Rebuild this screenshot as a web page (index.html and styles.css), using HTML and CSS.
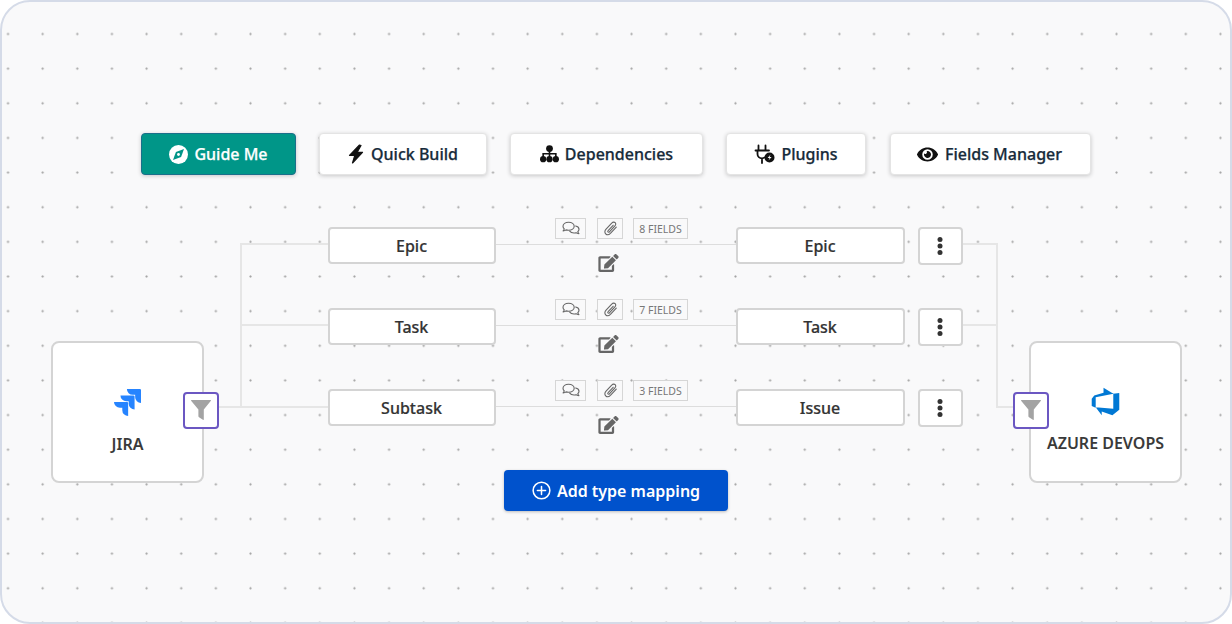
FILE: index.html
```html
<!DOCTYPE html>
<html lang="en">
<head>
<meta charset="utf-8">
<title>Type mapping</title>
<link rel="stylesheet" href="styles.css">
</head>
<body>
<svg class="sprites" width="0" height="0" aria-hidden="true">
  <symbol id="i-filter" viewBox="0 0 20 20"><path d="M.5 0h19a.5.5 0 0 1 .4.8L12.800 9.500V19.300a.6.6 0 0 1-.9.5L8 17.200a1 1 0 0 1-.6-.9V9.500L.1.800A.5.5 0 0 1 .5 0z" fill="#a3a3a3"/></symbol>
  <symbol id="i-comments" viewBox="0 0 24 20"><g fill="none" stroke="#666" stroke-width="1.400" stroke-linejoin="round" stroke-linecap="round"><path d="M9 1.500c-4 0-7 2.200-7 5.100 0 1.300.6 2.400 1.600 3.300-.3 1-.9 1.900-1.500 2.500 1.400-.1 2.800-.6 3.700-1.300.9.300 2 .5 3.200.5 4 0 7-2.200 7-5s-3-5.100-7-5.100z"/><path d="M17.800 6.200c2.500.5 4.200 2.200 4.200 4.200 0 1.200-.6 2.200-1.500 3 .2 1 .8 1.900 1.400 2.500-1.400-.1-2.700-.6-3.600-1.300-.8.300-1.700.4-2.600.4-2.300 0-4.300-.9-5.300-2.300"/></g></symbol>
  <symbol id="i-clip" viewBox="0 0 20 20"><path d="M16.800 8.400l-6.900 7.300c-1.700 1.700-4.200 1.900-5.600.5s-1.200-3.800.5-5.500l6.900-7.200c1.100-1.200 2.800-1.300 3.800-.3s.8 2.700-.3 3.800l-6.500 6.900c-.5.600-1.300.7-1.700.2s-.3-1.200.2-1.700l5.900-6.200" fill="none" stroke="#666" stroke-width="1.300" stroke-linecap="round" stroke-linejoin="round"/></symbol>
  <symbol id="i-edit" viewBox="0 0 576 512"><path fill="#666" d="M402.600 83.200l90.200 90.200c3.800 3.800 3.800 10 0 13.800L274.400 405.600l-92.800 10.300c-12.400 1.400-22.900-9.100-21.500-21.500l10.300-92.800L388.800 83.200c3.800-3.800 10-3.800 13.800 0zm162-22.900l-48.800-48.800c-15.200-15.200-39.900-15.200-55.200 0l-35.400 35.400c-3.800 3.800-3.800 10 0 13.800l90.200 90.200c3.800 3.800 10 3.800 13.800 0l35.400-35.400c15.200-15.300 15.200-40 0-55.200zM384 346.200V448H64V128h229.800c3.200 0 6.200-1.300 8.500-3.500l40-40c7.600-7.600 2.200-20.500-8.500-20.500H48C21.500 64 0 85.500 0 112v352c0 26.500 21.500 48 48 48h352c26.500 0 48-21.500 48-48V306.200c0-10.700-12.900-16-20.500-8.500l-40 40c-2.200 2.300-3.500 5.300-3.500 8.500z"/></symbol>
  <symbol id="i-dots" viewBox="0 0 6 20"><circle cx="3" cy="3.500" r="2.500" fill="#333"/><circle cx="3" cy="10" r="2.500" fill="#333"/><circle cx="3" cy="16.500" r="2.500" fill="#333"/></symbol>
</svg>

<main class="stage">
  <nav class="toolbar">
    <button class="tool tool-primary tool-guide">
      <svg class="tool-icon" width="19" height="19" viewBox="0 0 20 20"><circle cx="10" cy="10" r="10" fill="#fff"/><path d="M15.800 4.200l-3.100 8.500-8.500 3.100 3.100-8.500z" fill="#009688"/><circle cx="10" cy="10" r="1.500" fill="#fff"/></svg>
      Guide Me
    </button>
    <button class="tool tool-quick">
      <svg class="tool-icon" width="16" height="20" viewBox="0 0 16 20"><path d="M11.500 1L1.500 11.300h5.300L4.500 19 14.500 8.300H9.200L13 1.500z" fill="#111" stroke="#111" stroke-width="1.200" stroke-linejoin="round"/></svg>
      Quick Build
    </button>
    <button class="tool tool-deps">
      <svg class="tool-icon" width="19" height="18" viewBox="0 0 20 19"><g fill="#111"><circle cx="10" cy="3.800" r="3.600"/><circle cx="3.300" cy="15" r="3.300"/><circle cx="10" cy="15" r="3.300"/><circle cx="16.700" cy="15" r="3.300"/></g><path d="M10 5v9M3.300 13V9.300h13.400V13" fill="none" stroke="#111" stroke-width="1.700"/></svg>
      Dependencies
    </button>
    <button class="tool tool-plugins">
      <svg class="tool-icon" width="21" height="20" viewBox="0 0 21 20"><path d="M4.500 1.500v4.500M11.500 1.500v4.500M1.500 6.500h13.500M3.500 6.500v3.500c0 2.700 2 4.300 4.500 4.300 1.100 0 1.900-.3 2.700-.9M8 14.300V19" fill="none" stroke="#111" stroke-width="1.800" stroke-linecap="round"/><circle cx="15.500" cy="13.500" r="5" fill="#111"/><path d="M16.600 10.600l-3 3.300h2l-1.100 2.700 3.100-3.500h-2z" fill="#fff"/></svg>
      Plugins
    </button>
    <button class="tool tool-fields">
      <svg class="tool-icon" width="21" height="19" viewBox="0 0 576 512"><path fill="#111" d="M572.520 241.400C518.290 135.590 410.930 64 288 64S57.680 135.640 3.480 241.410a32.350 32.350 0 0 0 0 29.190C57.710 376.410 165.070 448 288 448s230.320-71.640 284.520-177.410a32.350 32.350 0 0 0 0-29.190zM288 400a144 144 0 1 1 144-144 143.930 143.930 0 0 1-144 144zm0-240a95.310 95.310 0 0 0-25.310 3.790 47.850 47.850 0 0 1-66.900 66.900A95.780 95.780 0 1 0 288 160z"/></svg>
      Fields Manager
    </button>
  </nav>

  <svg class="wires" width="1232" height="624" aria-hidden="true">
    <path d="M219 407H328M241 407V244H328M241 325H328M963 244H997V407H1013M963 325H997" fill="none" stroke="#e6e6e6" stroke-width="2"/>
  </svg>

  <section class="system system-source">
    <svg width="27" height="27" viewBox="0 0 24 24" class="system-logo">
      <path fill="#2684ff" d="M11.571 11.513H0a5.218 5.218 0 0 0 5.232 5.215h2.130v2.057A5.215 5.215 0 0 0 12.575 24V12.518a1.005 1.005 0 0 0-1.005-1.005zm5.723-5.756H5.736a5.215 5.215 0 0 0 5.215 5.214h2.129v2.058a5.218 5.218 0 0 0 5.215 5.214V6.758a1.001 1.001 0 0 0-1.001-1.001zM23.013 0H11.455a5.215 5.215 0 0 0 5.215 5.215h2.129v2.057A5.215 5.215 0 0 0 24 12.483V1.005A1.001 1.001 0 0 0 23.013 0Z"/>
    </svg>
    <span class="system-name">JIRA</span>
  </section>
  <button class="filter filter-source"><svg width="20" height="20"><use href="#i-filter"/></svg></button>

  <section class="system system-target">
    <svg width="31" height="31" viewBox="0 0 18 18" class="system-logo">
      <path fill="#0078d4" d="M17 4v9.740l-4 3.280-6.200-2.260V17L3.290 12.410l10.230.8V4.440zm-3.410.49L7.850 1v2.920L2.460 5.500 1 7.370v4.250l2.310 1.020V6.560z"/>
    </svg>
    <span class="system-name">AZURE DEVOPS</span>
  </section>
  <button class="filter filter-target"><svg width="20" height="20"><use href="#i-filter"/></svg></button>

  <div class="map-row row-1">
    <div class="type-box">Epic</div>
    <div class="link">
      <div class="chips">
        <span class="chip chip-comments"><svg width="20" height="16"><use href="#i-comments"/></svg></span>
        <span class="chip chip-clip"><svg width="17" height="17"><use href="#i-clip"/></svg></span>
        <span class="chip chip-fields">8 FIELDS</span>
      </div>
      <svg class="edit" width="21" height="18"><use href="#i-edit"/></svg>
    </div>
    <div class="type-box type-box-target">Epic</div>
    <button class="menu"><svg width="6" height="20"><use href="#i-dots"/></svg></button>
  </div>

  <div class="map-row row-2">
    <div class="type-box">Task</div>
    <div class="link">
      <div class="chips">
        <span class="chip chip-comments"><svg width="20" height="16"><use href="#i-comments"/></svg></span>
        <span class="chip chip-clip"><svg width="17" height="17"><use href="#i-clip"/></svg></span>
        <span class="chip chip-fields">7 FIELDS</span>
      </div>
      <svg class="edit" width="21" height="18"><use href="#i-edit"/></svg>
    </div>
    <div class="type-box type-box-target">Task</div>
    <button class="menu"><svg width="6" height="20"><use href="#i-dots"/></svg></button>
  </div>

  <div class="map-row row-3">
    <div class="type-box">Subtask</div>
    <div class="link">
      <div class="chips">
        <span class="chip chip-comments"><svg width="20" height="16"><use href="#i-comments"/></svg></span>
        <span class="chip chip-clip"><svg width="17" height="17"><use href="#i-clip"/></svg></span>
        <span class="chip chip-fields">3 FIELDS</span>
      </div>
      <svg class="edit" width="21" height="18"><use href="#i-edit"/></svg>
    </div>
    <div class="type-box type-box-target">Issue</div>
    <button class="menu"><svg width="6" height="20"><use href="#i-dots"/></svg></button>
  </div>

  <button class="add">
    <svg width="19" height="19" viewBox="0 0 20 20"><circle cx="10" cy="10" r="8.800" fill="none" stroke="#fff" stroke-width="1.600"/><path d="M10 5.700v8.600M5.700 10h8.600" stroke="#fff" stroke-width="1.600" stroke-linecap="round"/></svg>
    Add type mapping
  </button>
</main>
</body>
</html>
```

FILE: styles.css
```css
* { box-sizing: border-box; }

html, body {
  margin: 0;
  height: 100%;
  background: #fff;
}

body {
  font-family: "Noto Sans", "Open Sans", sans-serif;
  overflow: hidden;
}

.sprites { position: absolute; }

button {
  font: inherit;
  cursor: pointer;
}

.stage {
  position: relative;
  width: 1232px;
  height: 624px;
  border: 2px solid #d5dbe8;
  border-radius: 30px;
  background-color: #f9f9fa;
  background-image: radial-gradient(circle, #a4a4a4 0, #b4b4b4 .8px, transparent 1.5px);
  background-size: 34.65px 34.65px;
  background-position: -11.3px 14.7px;
  padding: 131px 0 0 139px;
}

.toolbar {
  display: flex;
  gap: 23px;
}

.tool {
  display: flex;
  align-items: center;
  justify-content: center;
  gap: 7px;
  height: 42px;
  padding: 0;
  border: 1px solid #e4e4e4;
  border-radius: 4px;
  background: #fff;
  box-shadow: 0 1px 4px rgba(0, 0, 0, .2);
  color: #172b3a;
  font-size: 16px;
  font-weight: 500;
  -webkit-text-stroke: .25px currentColor;
  white-space: nowrap;
}

.tool-primary {
  background: #009688;
  border-color: #1b6f8a;
  color: #fff;
}

.tool-guide { width: 155px; gap: 6px; }
.tool-quick { width: 168px; }
.tool-deps { width: 193px; gap: 6px; }
.tool-plugins { width: 140px; gap: 6px; }
.tool-fields { width: 201px; margin-left: 1px; padding-right: 2px; }

.wires {
  position: absolute;
  left: -2px;
  top: -2px;
  pointer-events: none;
}

.system {
  position: absolute;
  top: 339px;
  width: 153px;
  height: 142px;
  display: flex;
  flex-direction: column;
  align-items: center;
  border: 2px solid #d4d4d4;
  border-radius: 8px;
  background: #fff;
  color: #3a3a3a;
  font-size: 16px;
  font-weight: 600;
}

.system-source { left: 49px; padding-top: 46px; }
.system-target { left: 1027px; padding-top: 43px; }
.system-source .system-name { margin-top: 17px; }
.system-target .system-name { margin-top: 15px; }

.filter {
  position: absolute;
  top: 390px;
  width: 36px;
  height: 37px;
  padding: 0 0 2px;
  display: flex;
  align-items: center;
  justify-content: center;
  border: 2px solid #6b57c2;
  border-radius: 4px;
  background: #fff;
}

.filter-source { left: 181px; }
.filter-target { left: 1011px; }

.map-row {
  position: absolute;
  left: 326px;
  display: flex;
  align-items: flex-start;
  height: 37px;
}

.row-1 { top: 225px; }
.row-2 { top: 306px; }
.row-3 { top: 387px; }

.type-box {
  width: 168px;
  height: 37px;
  padding-right: 1px;
  display: flex;
  align-items: center;
  justify-content: center;
  border: 2px solid #d4d4d4;
  border-radius: 4px;
  background: #fff;
  color: #333;
  font-size: 16px;
  font-weight: 500;
  -webkit-text-stroke: .2px currentColor;
}

.type-box-target { width: 169px; }

.link {
  position: relative;
  width: 240px;
  height: 1px;
  margin-top: 17px;
  background: #ddd;
}

.chips {
  position: absolute;
  left: 59px;
  top: -26px;
  display: flex;
  gap: 11px;
  height: 21px;
}

.chip {
  display: flex;
  align-items: center;
  justify-content: center;
  height: 21px;
  border: 1px solid #d6d6d6;
  background: #f9f9fa;
  color: #777;
  font-size: 10.500px;
}

.chip-comments { width: 31px; }
.chip-clip { width: 26px; }
.chip-fields { width: 55px; margin-left: -1px; }

.edit {
  position: absolute;
  left: 102px;
  top: 10px;
}

.menu {
  width: 45px;
  height: 38px;
  margin-left: 13px;
  padding: 0 1px 0 0;
  display: flex;
  align-items: center;
  justify-content: center;
  border: 2px solid #d4d4d4;
  border-radius: 4px;
  background: #fff;
}

.add {
  position: absolute;
  left: 502px;
  top: 468px;
  width: 224px;
  height: 41px;
  padding: 0;
  display: flex;
  align-items: center;
  justify-content: center;
  gap: 6px;
  border: none;
  border-radius: 4px;
  background: #0052cc;
  box-shadow: 0 1px 3px rgba(0, 0, 0, .25);
  color: #fff;
  font-size: 16px;
  font-weight: 600;
}
```
